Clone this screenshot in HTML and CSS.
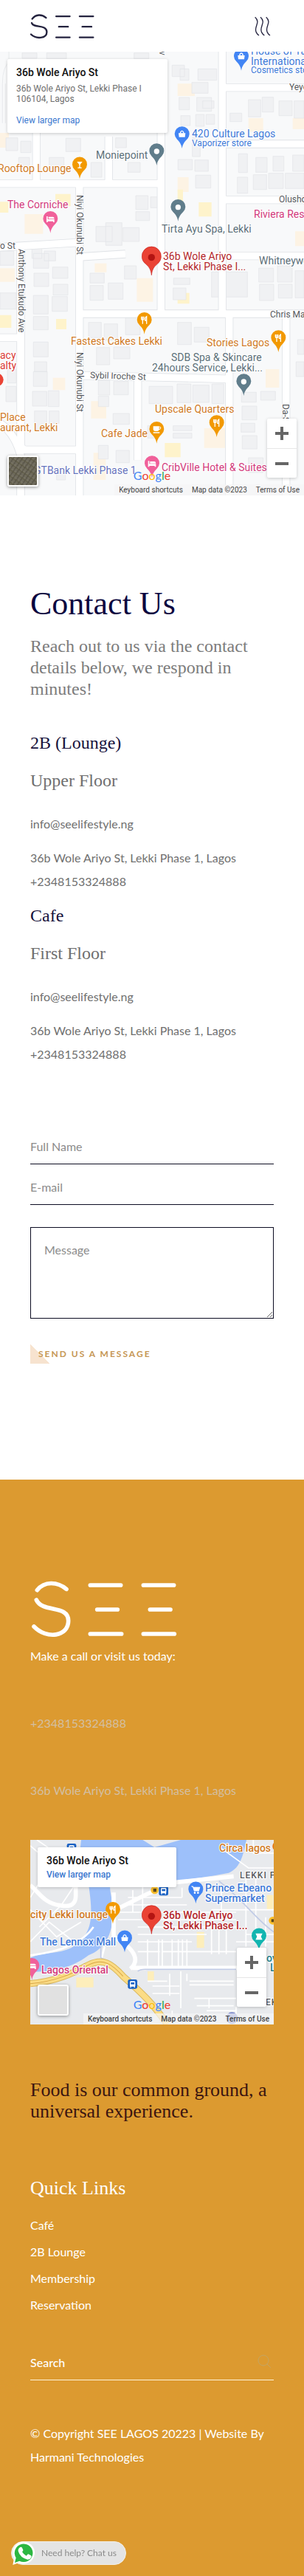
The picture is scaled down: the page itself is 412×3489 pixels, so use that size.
FILE: index.html
```html
<!DOCTYPE html>
<html lang="en">
<head>
<meta charset="utf-8">
<meta name="viewport" content="width=device-width, initial-scale=1">
<title>Contact Us – SEE Lagos</title>
<link rel="stylesheet" href="styles.css">
</head>
<body>
<svg class="defs" width="0" height="0" aria-hidden="true">
  <defs>
    <g id="pin"><path d="M0 0C-3-18-10-27-20-37A30 30 0 1 1 20-37C10-27 3-18 0 0Z"/></g>
    <g id="dot"><circle cy="-57" r="11" fill="#fff"/></g>
    <g id="fork" fill="none" stroke="#fff" stroke-width="4"><path d="M-12-72V-62Q-12-58-7-58Q-2-58-2-62V-72M-7-72V-42M9-42V-72Q2-68 3-56H9"/></g>
    <g id="bag"><path d="M-14-62H14L12-46H-12Z" fill="#fff"/><path d="M-6-61V-66Q0-76 6-66V-61" fill="none" stroke="#fff" stroke-width="4"/></g>
    <g id="bed" fill="#fff"><path d="M-16-68h5v12h27v12h-5v-4h-22v4h-5z"/><path d="M-8-66H10Q16-66 16-58H-8Z"/></g>
    <g id="bus"><rect x="-19" y="-19" width="38" height="38" rx="7" fill="#1b62c4"/><rect x="-11" y="-12" width="22" height="22" rx="4" fill="#fff"/><path d="M-7-7H7V1H-7Z" fill="#1b62c4"/><path d="M-8 9v5M8 9v5" stroke="#fff" stroke-width="4"/></g>
    <g id="place"><path d="M0 0C-3-26-11-34-24-46A39 39 0 1 1 24-46C11-34 3-26 0 0Z" fill="#ea4335" stroke="#c5221f" stroke-width="2"/><circle cy="-72" r="14" fill="#b31412"/></g>
  </defs>
</svg>

<header class="header">
  <a class="header-logo" href="#" aria-label="SEE">
    <svg viewBox="120 52 266 104" fill="none" stroke="#24233f" stroke-width="7" stroke-linecap="round"><path d="M131 74C145 56 169 54 187 70M129 91C135 113 189 95 190 127C190 155 146 157 126 137M228 64H283M239 106H276M228 149H283M323 64H378M334 106H371M323 149H378"/></svg>
  </a>
  <button class="menu-button" type="button" aria-label="Open menu">
    <svg viewBox="1032 56 72 86" fill="none" stroke="#24233f" stroke-width="4"><path d="M1037 62C1062 84 1030 102 1042 124Q1046 132 1053 136M1059 62C1084 84 1052 102 1064 124Q1068 132 1075 136M1082 62C1107 84 1075 102 1087 124Q1091 132 1098 136"/></svg>
  </button>
</header>

<main>
  <section class="map map-main" aria-label="Map of 36b Wole Ariyo St">
    <svg class="map-art" viewBox="0 70 412 601" preserveAspectRatio="xMidYMid slice">
      <rect y="70" width="412" height="601" fill="#f8f9fa"/>
      <g transform="scale(.333334)">
        <path fill="#fdf3e4" d="M1010 480h60v55h-60zM1190 480h46v45h-46zM722 340h70v50h-70zM0 540h36v60h-36zM722 720h45v60h-45zM100 870h75v80h-75zM1200 940h36v60h-36zM0 1090h60v55h-60zM385 1070h48v36h-48zM556 1130h66v96h-66zM215 1535h50v50h-50zM370 1630h62v70h-62zM830 1740h85v80h-85zM380 1840h50v110h-50zM1080 1500h55v75h-55z"/>
        <path fill="#fef3cb" d="M225 788h62v50h-62zM0 820h34v44h-34zM808 822h52v58h-52zM722 1190h48v44h-48zM228 1296h42v42h-42zM0 1280h46v52h-46zM670 1800h64v58h-64zM722 770h22v60h-22z"/>
        <path fill="#f0f1f3" stroke="#e2e4e7" stroke-width="2" d="M90 215h60v22h-60zM190 215h80v24h-80zM545 215h60v24h-60zM700 265h50v46h-50zM732 280h36v46h-36zM805 280h76v46h-76zM780 335h66v44h-66zM728 396h42v50h-42zM800 396h60v56h-60zM824 410h46v30h-46zM735 470h38v40h-38zM796 465h34v48h-34zM838 465h34v40h-34zM724 648h58v42h-58zM792 650h55v46h-55zM795 712h62v52h-62zM782 560h32v76h-32zM24 560h48v52h-48zM84 574h42v46h-42zM268 562h60v54h-60zM470 560h44v40h-44zM520 660h50v40h-50zM370 660h44v60h-44zM200 640h60v44h-60zM76 640h44v40h-44zM1010 405h50v70h-50zM1066 395h46v60h-46zM1134 410h54v60h-54zM1196 410h40v70h-40zM935 460h48v34h-48zM970 625h36v76h-36zM1040 640h46v60h-46zM1110 635h44v60h-44zM1190 630h46v66h-46zM965 720h42v65h-42zM1030 710h54v60h-54zM1092 704h60v62h-60zM1160 704h76v62h-76zM552 795h50v56h-50zM612 800h36v44h-36zM552 860h56v36h-56zM390 920h66v62h-66zM430 905h66v92h-66zM500 925h66v56h-66zM130 1000h40v50h-40zM180 1020h46v40h-46zM0 1020h56v58h-56zM136 1030h62v60h-62zM214 1085h62v46h-62zM138 1110h60v54h-60zM216 1155h60v44h-60zM136 1200h60v76h-60zM212 1205h62v60h-62zM0 1190h66v66h-66zM136 1286h60v54h-60zM366 1110h58v40h-58zM366 1160h54v60h-54zM506 1080h48v54h-48zM440 1150h60v66h-60zM706 1130h66v26h-66zM704 1170h52v48h-52zM860 1105h146v102h-146zM1052 1090h60v56h-60zM1055 1155h58v66h-58zM1128 1080h60v66h-60zM1132 1155h56v56h-56zM1200 1100h36v110h-36zM360 1310h52v62h-52zM424 1316h54v66h-54zM510 1290h60v70h-60zM722 1310h56v90h-56zM790 1330h60v60h-60zM392 1412h54v70h-54zM462 1410h66v48h-66zM136 1390h60v60h-60zM140 1470h50v40h-50zM136 1510h56v60h-56zM132 1590h58v60h-58zM196 1588h44v64h-44zM140 1670h50v76h-50zM200 1670h40v50h-40zM30 1500h36v56h-36zM24 1570h42v62h-42zM400 1545h46v60h-46zM462 1550h60v54h-60zM400 1610h42v42h-42zM460 1680h66v44h-66zM606 1570h96v70h-96zM720 1560h56v76h-56zM784 1565h66v70h-66zM862 1560h48v80h-48zM982 1594h60v40h-60zM1060 1590h60v36h-60zM984 1650h60v56h-60zM980 1720h56v36h-56zM985 1770h60v54h-60zM600 1730h30v50h-30zM704 1730h76v20h-76zM704 1760h76v20h-76zM400 1810h40v55h-40zM472 1830h54v50h-54zM1010 1860h60v60h-60zM230 1900h36v50h-36zM1210 1380h26v60h-26zM1204 1470h32v60h-32z"/>
        <path fill="none" stroke="#dfe2e6" stroke-width="34" d="M0 746H650M323 746V2013M655 535V1270M148 540V746M442 555V746M904 210V1277M1236 356H904M1236 585H904M1236 812H904M-10 1005L323 985M323 1044L510 1032M323 1275H1236M0 1372H84V1000M84 1372V1800Q84 1828 110 1828H323M323 1526L604 1532L932 1540M932 1275V2013M1163 1275V2013M560 1532V1870M0 1720Q60 1760 84 1850V2013M666 1040H1236"/>
        <path fill="none" stroke="#fff" stroke-width="29" d="M0 746H650M323 746V2013M655 535V1270M148 540V746M442 555V746M904 210V1277M1236 356H904M1236 585H904M1236 812H904M-10 1005L323 985M323 1044L510 1032M323 1275H1236M0 1372H84V1000M84 1372V1800Q84 1828 110 1828H323M323 1526L604 1532L932 1540M932 1275V2013M1163 1275V2013M560 1532V1870M0 1720Q60 1760 84 1850V2013M666 1040H1236"/>
        <path fill="none" stroke="#dfe2e6" stroke-width="2" d="M36 210V250M10 500V340Q10 270 40 250M22 500V340"/>
        <g transform="translate(981 287)"><use href="#pin" fill="#4285f4"/><use href="#bag"/></g>
        <g transform="translate(740 603)"><use href="#pin" fill="#4285f4"/><use href="#bag"/></g>
        <g transform="translate(637 672)"><use href="#pin" fill="#607d8b"/><use href="#dot"/></g>
        <g transform="translate(324 727)"><use href="#pin" fill="#f29900"/><path d="M-11-70H11L2-58V-47H8V-43H-8V-47H-2V-58Z" fill="#fff"/></g>
        <g transform="translate(205 947)"><use href="#pin" fill="#f0609a"/><use href="#bed"/></g>
        <g transform="translate(724 899)"><use href="#pin" fill="#607d8b"/><use href="#dot"/></g>
        <g transform="translate(587 1358)"><use href="#pin" fill="#f29900"/><use href="#fork"/></g>
        <g transform="translate(1132 1431)"><use href="#pin" fill="#f29900"/><use href="#fork"/></g>
        <g transform="translate(991 1608)"><use href="#pin" fill="#607d8b"/><use href="#dot"/></g>
        <g transform="translate(881 1776)"><use href="#pin" fill="#f29900"/><use href="#fork"/></g>
        <g transform="translate(637 1802)"><use href="#pin" fill="#f29900"/><path d="M-14-70H10V-55Q8-50 2-50H-6Q-12-50-14-56ZM-14-46H12V-42H-14Z" fill="#fff"/><path d="M9-67Q18-68 16-62Q14-57 8-58" fill="none" stroke="#fff" stroke-width="3"/></g>
        <g transform="translate(618 1941)"><use href="#pin" fill="#f0609a"/><use href="#bed"/></g>
        <circle cx="-12" cy="1543" r="26" fill="#ea4335"/>
        <g transform="translate(616 1118)"><use href="#place"/></g>
      </g>
      <g class="poi blue"><text x="340" y="74">House of Tara</text><text x="340" y="88">International</text><text class="small" x="340" y="99">Cosmetics store</text><text x="260" y="186">420 Culture Lagos</text><text class="small" x="260" y="198">Vaporizer store</text></g>
      <g class="poi slate"><text x="130" y="215">Moniepoint</text><text x="219" y="315">Tirta Ayu Spa, Lekki</text><text x="351" y="358">Whitneywood</text><text x="232" y="489">SDB Spa &amp; Skincare</text><text x="206" y="503">24hours Service, Lekki...</text></g>
      <g class="poi orange"><text x="-3" y="233">Rooftop Lounge</text><text x="96" y="467">Fastest Cakes Lekki</text><text x="280" y="469">Stories Lagos</text><text x="210" y="559">Upscale Quarters</text><text x="137" y="592">Cafe Jade</text><text x="0" y="570">Place</text><text x="0" y="584">aurant, Lekki</text></g>
      <g class="poi pink"><text x="10" y="282">The Corniche</text><text x="344" y="295">Riviera Residence</text><text x="219" y="638">CribVille Hotel &amp; Suites</text></g>
      <g class="poi red"><text x="221" y="352">36b Wole Ariyo</text><text x="221" y="366">St, Lekki Phase I...</text></g>
      <g class="poi scarlet"><text x="0" y="486">acy</text><text x="0" y="500">alty</text></g>
      <g class="poi indigo"><text x="46" y="642">GTBank Lekki Phase 1</text></g>
      <g class="street"><text x="392" y="122">Yeye</text><text x="378" y="274">Olushola</text><text x="366" y="430">Chris Maduike</text><text x="122" y="512" transform="rotate(2 122 512)">Sybil Iroche St</text><text x="0" y="337">o St</text><text transform="translate(104 264) rotate(90)">Niyi Okunubi St</text><text transform="translate(104 477) rotate(90)">Niyi Okunubi St</text><text transform="translate(25 337) rotate(90)">Anthony Etukudo Ave</text><text transform="translate(383 547) rotate(90)">Da-Silva</text><text transform="translate(216 69) rotate(90)">v</text></g>
    </svg>
    <div class="map-card">
      <h2 class="map-title">36b Wole Ariyo St</h2>
      <p class="map-address">36b Wole Ariyo St, Lekki Phase I 106104, Lagos</p>
      <a class="map-link" href="#">View larger map</a>
    </div>
    <button class="map-thumb satellite" type="button" aria-label="Show satellite imagery"></button>
    <div class="map-zoom">
      <button type="button" aria-label="Zoom in"><svg viewBox="0 0 18 18"><path d="M9 0V18M0 9H18" stroke="#666" stroke-width="4"/></svg></button>
      <button type="button" aria-label="Zoom out"><svg viewBox="0 0 18 18"><path d="M0 9H18" stroke="#666" stroke-width="4"/></svg></button>
    </div>
    <div class="google" aria-label="Google"><span class="g-blue">G</span><span class="g-red">o</span><span class="g-yellow">o</span><span class="g-blue">g</span><span class="g-green">l</span><span class="g-red">e</span></div>
    <div class="map-legal"><button type="button">Keyboard shortcuts</button><span>Map data ©2023</span><a href="#">Terms of Use</a></div>
  </section>

  <section class="contact">
    <h1 class="contact-title">Contact Us</h1>
    <p class="contact-lead">Reach out to us via the contact details below, we respond in minutes!</p>

    <div class="venue venue-first">
      <h2 class="venue-name">2B (Lounge)</h2>
      <h3 class="venue-floor">Upper Floor</h3>
      <p class="venue-mail"><a href="mailto:info@seelifestyle.ng">info@seelifestyle.ng</a></p>
      <p>36b Wole Ariyo St, Lekki Phase 1, Lagos</p>
      <p><a href="tel:+2348153324888">+2348153324888</a></p>
    </div>
    <div class="venue">
      <h2 class="venue-name">Cafe</h2>
      <h3 class="venue-floor">First Floor</h3>
      <p class="venue-mail"><a href="mailto:info@seelifestyle.ng">info@seelifestyle.ng</a></p>
      <p>36b Wole Ariyo St, Lekki Phase 1, Lagos</p>
      <p><a href="tel:+2348153324888">+2348153324888</a></p>
    </div>

    <form class="contact-form">
      <input class="line-input" type="text" aria-label="Full Name" placeholder="Full Name">
      <input class="line-input" type="email" aria-label="E-mail" placeholder="E-mail">
      <textarea class="message" aria-label="Message" placeholder="Message"></textarea>
      <button class="send" type="submit">Send us a message</button>
    </form>
  </section>
</main>

<footer class="footer">
  <svg class="footer-logo" viewBox="123 480 600 234" fill="none" stroke="#fff" stroke-width="17" stroke-linecap="round" role="img" aria-label="SEE"><path d="M151 521C180 485 232 485 270 517M148 561C173 615 278 579 278 646C278 710 190 723 138 669M367 501H491M395 600H478M367 699H494M583 501H707M610 600H693M583 699H709"/></svg>
  <p class="footer-call">Make a call or visit us today:</p>
  <p class="footer-muted"><a href="tel:+2348153324888">+2348153324888</a></p>
  <p class="footer-muted">36b Wole Ariyo St, Lekki Phase 1, Lagos</p>

  <section class="map map-small" aria-label="Area map of 36b Wole Ariyo St">
    <svg class="map-art" viewBox="41 22 330 250" preserveAspectRatio="xMidYMid slice">
      <rect x="41" y="22" width="330" height="250" fill="#e8eaed"/>
      <g transform="scale(.333334)">
        <path fill="#9dc0fa" d="M330 66L322 140H358C350 230 372 290 370 360C370 430 345 470 290 505C240 530 180 520 123 545V602C230 605 310 575 360 535C425 510 455 455 460 370C462 310 440 270 450 240L716 232C800 222 850 215 930 200C980 180 990 120 1002 66H735L628 96L580 66Z"/>
        <path fill="#fdeebb" d="M800 440h30v65h-30zM310 625h70v40h-70zM1085 290h26v60h-26zM600 600h26v40h-26z"/>
        <path fill="none" stroke="#fff" stroke-width="5" d="M123 350L230 460L330 400M160 420L250 330L310 240M123 480L200 400L300 480M200 100L150 66M123 90L170 130M123 300L160 240M480 360H960M480 390H960M500 330H760M520 300H740M540 270V360M580 250V360M560 420H960M560 450H840M600 470V580M645 470V580M660 470V580M700 470V580M725 470V580M742 470V580M760 470V580M860 400V530M890 400V530M920 400V530M560 480H780M560 520H650M660 520H960M690 610V700M735 600V750M600 640H680M620 660H730M620 690H730M760 610V640M770 640H950M770 655H950M790 710H960M800 740H950M840 760H960M700 760V815M850 710V750M1000 220V500M1040 220V470M1080 380V500M960 480H1113M740 260V300M900 250V380M1000 450H1113M860 350H1113M900 100L1010 180H1113M960 745V815M1113 120H1030V66"/>
        <path fill="none" stroke="#fff" stroke-width="17" d="M123 250C160 280 180 325 245 332Q310 345 308 290V200M480 345L600 285L716 238L950 214M462 280V460C560 515 565 560 530 590M540 586H965"/>
        <path fill="none" stroke="#fff" stroke-width="8" d="M123 535C250 520 340 480 380 420M400 600L425 500"/>
        <path fill="none" stroke="#c1cbe6" stroke-width="5" d="M890 233C1000 320 1040 390 1113 440M410 500V545L460 570M560 600Q570 590 600 592H960"/>
        <path fill="none" stroke="#dbb95e" stroke-width="28" d="M123 650C240 640 310 600 360 574C420 545 455 570 500 620C580 690 620 730 680 815"/>
        <path fill="none" stroke="#fbdc85" stroke-width="22" d="M123 650C240 640 310 600 360 574C420 545 455 570 500 620C580 690 620 730 680 815"/>
        <path fill="none" stroke="#d8a546" stroke-width="3" d="M123 650C240 640 310 600 360 574C420 545 455 570 500 620"/>
        <g transform="translate(291 100)"><use href="#bus"/></g>
        <circle cx="629" cy="270" r="16" fill="#fbc02d"/><path d="M623 264h13v13h-13z" fill="#5b4a20"/>
        <circle cx="1109" cy="394" r="16" fill="#fbc02d"/><path d="M1103 388h12v12h-12z" fill="#5b4a20"/>
        <g transform="translate(665 273)"><use href="#bus"/></g>
        <g transform="translate(539 652)"><use href="#bus"/></g>
        <g transform="translate(796 325)"><use href="#pin" fill="#4285f4"/><path d="M-18-70H-12L-6-52H12L16-66H-10" fill="#fff" stroke="#fff" stroke-width="3"/><circle cx="-4" cy="-44" r="4" fill="#fff"/><circle cx="9" cy="-44" r="4" fill="#fff"/></g>
        <g transform="translate(459 407)"><use href="#pin" fill="#f29900"/><use href="#fork"/></g>
        <g transform="translate(507 523)"><use href="#pin" fill="#4285f4"/><use href="#bag"/></g>
        <g transform="translate(130 635)"><use href="#pin" fill="#f0609a"/><use href="#bed"/></g>
        <g transform="translate(1053 514)"><use href="#pin" fill="#12b5b0"/><path d="M-14-68H14L8-55L14-42H-14L-8-55Z" fill="#fff"/></g>
        <circle cx="1130" cy="92" r="22" fill="#e8710a"/>
        <circle cx="943" cy="790" r="24" fill="#7986cb"/>
        <g transform="translate(616 448)"><use href="#place"/></g>
      </g>
      <g class="poi orange"><text x="297" y="38">Circa lagos</text><text x="41" y="128">city Lekki lounge</text></g>
      <g class="poi blue"><text x="278" y="92">Prince Ebeano</text><text x="278" y="106">Supermarket</text><text x="54" y="165">The Lennox Mall</text></g>
      <g class="poi red"><text x="221" y="129">36b Wole Ariyo</text><text x="221" y="143">St, Lekki Phase I...</text></g>
      <g class="poi pink"><text x="56" y="203">Lagos Oriental</text></g>
      <g class="poi teal"><text x="361" y="187">ov</text><text x="366" y="200">Le</text></g>
      <g class="district"><text x="325" y="74">LEKKI PHASE</text><text x="360" y="246">EKKI</text></g>
    </svg>
    <div class="map-card">
      <h2 class="map-title">36b Wole Ariyo St</h2>
      <a class="map-link" href="#">View larger map</a>
    </div>
    <button class="map-thumb" type="button" aria-label="Show satellite imagery"></button>
    <div class="map-zoom">
      <button type="button" aria-label="Zoom in"><svg viewBox="0 0 18 18"><path d="M9 0V18M0 9H18" stroke="#666" stroke-width="4"/></svg></button>
      <button type="button" aria-label="Zoom out"><svg viewBox="0 0 18 18"><path d="M0 9H18" stroke="#666" stroke-width="4"/></svg></button>
    </div>
    <div class="google" aria-label="Google"><span class="g-blue">G</span><span class="g-red">o</span><span class="g-yellow">o</span><span class="g-blue">g</span><span class="g-green">l</span><span class="g-red">e</span></div>
    <div class="map-legal"><button type="button">Keyboard shortcuts</button><span>Map data ©2023</span><a href="#">Terms of Use</a></div>
  </section>

  <p class="motto">Food is our common ground, a universal experience.</p>

  <nav class="quick" aria-labelledby="quick-title">
    <h2 class="quick-title" id="quick-title">Quick Links</h2>
    <ul class="quick-list">
      <li><a href="#">Café</a></li>
      <li><a href="#">2B Lounge</a></li>
      <li><a href="#">Membership</a></li>
      <li><a href="#">Reservation</a></li>
    </ul>
  </nav>

  <form class="search" role="search">
    <input class="search-input" type="search" aria-label="Search" placeholder="Search">
    <button class="search-button" type="submit" aria-label="Submit search"><svg viewBox="0 0 20 20" fill="none" stroke="#c4a564"><circle cx="9" cy="8" r="7"/><path d="M14 13L19 18"/></svg></button>
  </form>

  <p class="copyright">© Copyright SEE LAGOS 20223 | Website By Harmani Technologies</p>
</footer>

<a class="chat" href="#">
  <svg class="chat-icon" viewBox="0 0 96 102"><path d="M4 99L9 72A45 45 0 1 1 28 90Z" fill="#fff"/><path d="M12 90L17 70A37 37 0 1 1 31 83Z" fill="#2cb742"/><path d="M34 27Q39 24 42 29L46 38Q47 41 42 46Q48 57 59 62L64 56Q67 54 70 56L78 61Q81 63 79 68Q74 78 64 77Q34 71 26 43Q25 33 34 27Z" fill="#fff"/></svg>
  <span>Need help? Chat us</span>
</a>
</body>
</html>
```
FILE: styles.css
```css
* {
  box-sizing: border-box;
}

body {
  margin: 0;
  position: relative;
  background: #fff;
  color: #6f6f6f;
  font-family: Lato, "Liberation Sans", sans-serif;
  font-size: 16px;
  line-height: 32px;
}

h1, h2, h3, p, ul {
  margin: 0;
  padding: 0;
  font-weight: 400;
}

a {
  color: inherit;
  text-decoration: none;
}

button {
  margin: 0;
  padding: 0;
  border: 0;
  background: none;
  color: inherit;
  font: inherit;
  cursor: pointer;
}

svg {
  display: block;
}

.defs {
  position: absolute;
}

/* Header */
.header {
  display: flex;
  align-items: center;
  justify-content: space-between;
  height: 70px;
  padding: 0 44px 0 40px;
}

.header-logo svg {
  width: 89px;
  height: 35px;
}

.menu-button svg {
  width: 24px;
  height: 29px;
}

/* Maps */
.map {
  position: relative;
  overflow: hidden;
  font-family: Roboto, sans-serif;
}

.map-main {
  height: 601px;
}

.map-small {
  height: 250px;
  margin-top: 51px;
}

.map-art {
  width: 100%;
  height: 100%;
}

.poi text,
.street text,
.district text {
  font-size: 14px;
  paint-order: stroke;
  stroke: #fff;
  stroke-width: 2px;
  stroke-linejoin: round;
}

.poi .small {
  font-size: 12px;
}

.street text,
.district text {
  font-size: 12px;
  fill: #55585c;
}

.district text {
  letter-spacing: 1px;
}

.blue { fill: #3d79d8; }
.slate { fill: #5b6f79; }
.orange { fill: #cf7a26; }
.pink { fill: #d23a7c; }
.red { fill: #b3262a; }
.scarlet { fill: #d93a34; }
.indigo { fill: #6673bd; }
.teal { fill: #24808c; }

.map-card {
  position: absolute;
  top: 10px;
  left: 10px;
  display: flex;
  flex-direction: column;
  align-items: flex-start;
  padding: 9px 12px 8px;
  border-radius: 2px;
  background: #fff;
  box-shadow: 0 1px 4px rgba(0, 0, 0, 0.2);
  font-size: 12px;
  line-height: 14px;
}

.map-main .map-card {
  width: 217px;
  height: 100px;
}

.map-small .map-card {
  gap: 3px;
  width: 188px;
  height: 54px;
}

.map-title {
  color: #111;
  font-size: 14px;
  font-weight: 500;
  line-height: 18px;
}

.map-address {
  margin: 6px 0 15px;
}

.map-link {
  color: #3b78cf;
}

.map-thumb {
  position: absolute;
  bottom: 12px;
  left: 10px;
  width: 42px;
  height: 42px;
  border: 2px solid #fff;
  border-radius: 3px;
  background: #e1e1e1;
  box-shadow: 0 1px 4px rgba(0, 0, 0, 0.4);
}

.satellite {
  background:
    repeating-linear-gradient(125deg, rgba(80, 76, 64, 0.5) 0 2px, transparent 2px 5px),
    repeating-linear-gradient(35deg, #6f6b5d 0 3px, #67634f 3px 5px, #757162 5px 7px);
}

.map-zoom {
  position: absolute;
  right: 10px;
  bottom: 24px;
  width: 40px;
  border-radius: 2px;
  background: #fff;
  box-shadow: 0 1px 4px rgba(0, 0, 0, 0.2);
}

.map-zoom button {
  display: flex;
  align-items: center;
  justify-content: center;
  width: 100%;
  height: 40px;
}

.map-zoom button + button {
  border-top: 1px solid #e6e6e6;
}

.map-zoom svg {
  width: 18px;
  height: 18px;
}

.google {
  position: absolute;
  right: 0;
  bottom: 16px;
  left: 0;
  font-family: Lato, sans-serif;
  font-size: 16px;
  line-height: 22px;
  text-align: center;
  text-shadow: 0 0 1px #fff;
}

.g-blue { color: #4285f4; }
.g-red { color: #ea4335; }
.g-yellow { color: #fbbc04; }
.g-green { color: #34a853; }

.map-legal {
  position: absolute;
  right: 0;
  bottom: 0;
  display: flex;
  gap: 12px;
  padding: 0 6px;
  background: rgba(245, 245, 245, 0.7);
  color: #444;
  font-size: 10px;
  line-height: 15px;
}

/* Contact */
.contact {
  padding: 122px 41px 157px;
}

.contact-title,
.contact-lead,
.venue-name,
.venue-floor,
.motto,
.quick-title {
  font-family: "Liberation Serif", serif;
  font-size: 24px;
  line-height: 29px;
}

.contact-title {
  color: #0b0640;
  font-size: 44px;
  line-height: 50px;
}

.contact-lead {
  margin-top: 18px;
  color: #7c7c7c;
}

.venue {
  margin-top: 16px;
}

.venue-first {
  margin-top: 44px;
}

.venue-name {
  color: #17123c;
}

.venue-floor {
  margin-top: 22px;
}

.venue-mail {
  margin: 28px 0 14px;
}

.contact-form {
  display: flex;
  flex-direction: column;
  align-items: flex-start;
  margin-top: 85px;
}

.line-input,
.message,
.search-input {
  width: 100%;
  height: 48px;
  padding: 0;
  border: 0;
  border-radius: 0;
  outline: 0;
  background: none;
  color: inherit;
  font: inherit;
}

.line-input {
  margin-bottom: 7px;
  border-bottom: 1px solid #0c0c22;
}

.message {
  height: 124px;
  margin: 23px 0 35px;
  padding: 14px 18px;
  border: 1px solid #0c0c22;
}

.line-input::placeholder,
.message::placeholder {
  color: #8c8c8c;
  opacity: 1;
}

.send {
  height: 26px;
  padding: 0 11px;
  background: linear-gradient(to top right, #f7e3cf 50%, transparent 50%) left / 27px 26px no-repeat;
  color: #c69755;
  font-size: 12px;
  font-weight: 700;
  letter-spacing: 2px;
  line-height: 26px;
  text-transform: uppercase;
}

/* Footer */
.footer {
  padding: 136px 41px 145px;
  background: #dc9a30;
  color: #fff;
  font-weight: 500;
}

.footer-logo {
  width: 200px;
  height: 78px;
}

.footer-call {
  margin-top: 9px;
}

.footer-muted {
  margin-top: 59px;
  color: #d3bfa2;
  font-weight: 400;
}

.motto,
.quick-title {
  font-size: 26px;
}

.motto {
  margin-top: 74px;
  color: #3b1511;
}

.quick-title {
  margin: 75px 0 18px;
}

.quick-list {
  list-style: none;
  line-height: 36px;
}

.search {
  display: flex;
  margin-top: 35px;
  border-bottom: 1px solid #fff3d6;
}

.search-input::placeholder {
  color: #fff;
  opacity: 1;
}

.search-button {
  flex: none;
  padding: 0 3px;
}

.search-button svg {
  width: 20px;
  height: 20px;
}

.copyright {
  margin-top: 56px;
}

/* Chat bubble */
.chat {
  position: fixed;
  bottom: 15px;
  left: 15px;
  display: flex;
  align-items: center;
  gap: 8px;
  height: 32px;
  padding-right: 12px;
  border: 1px solid #f4efe6;
  border-radius: 16px;
  background: #e4e4e4;
  color: #8b8b8b;
  font-size: 12px;
}

.chat-icon {
  width: 32px;
  height: 34px;
}
```
